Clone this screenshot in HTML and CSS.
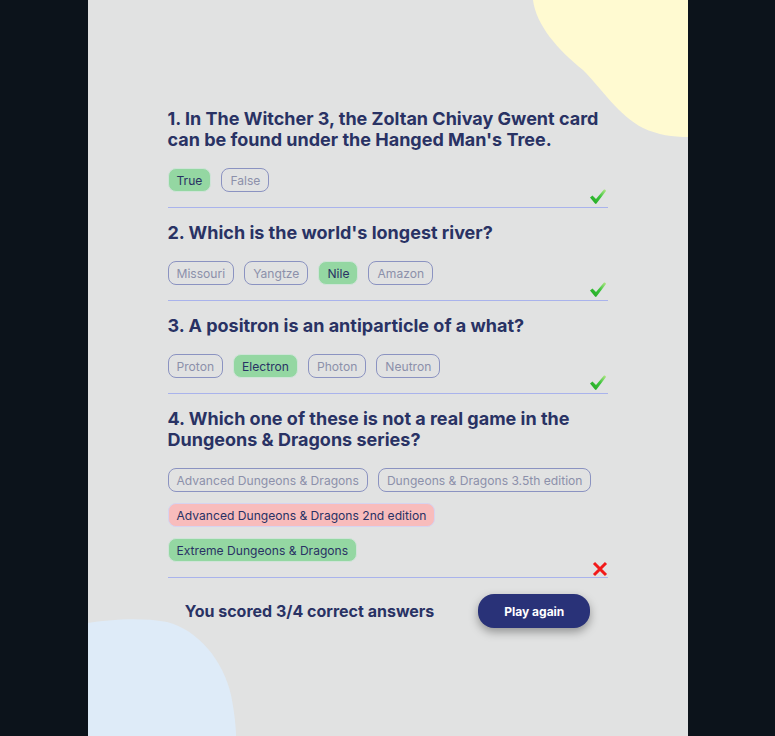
FILE: index.html
```html
<!DOCTYPE html>
<html lang="en">
<head>
<meta charset="utf-8">
<title>Quizzical</title>
<link rel="stylesheet" href="styles.css">
</head>
<body>
<div class="page">
  <svg class="blob blob-yellow" width="600" height="140" viewBox="0 0 600 140">
    <path d="M445,0 C448,25 470,50 495,70 C515,90 530,115 555,128 C570,135 585,137 600,137 L600,0 Z" fill="#fffad1"/>
  </svg>
  <svg class="blob blob-blue" width="150" height="120" viewBox="0 616 150 120">
    <path d="M0,623 C20,620 50,617 79,622 C110,630 135,660 143,695 C147,715 148,730 148,736 L0,736 Z" fill="#deebf8"/>
  </svg>
  <main class="quiz">
    <section class="question">
      <h2 class="q-title">1. In The Witcher 3, the Zoltan Chivay Gwent card can be found under the Hanged Man's Tree.</h2>
      <div class="answers">
        <span class="answer correct">True</span>
        <span class="answer">False</span>
      </div>
      <svg class="mark check" width="18" height="17" viewBox="0 0 18 17"><defs><linearGradient id="g1" x1="0" y1="1" x2="1" y2="0"><stop offset="0" stop-color="#1fa51f"/><stop offset="0.55" stop-color="#3cc43c"/><stop offset="1" stop-color="#b6e88a"/></linearGradient></defs><path d="M1,9.5 L3.5,7.5 L7,11 L15,1.5 Q17,1 17,3 L7.5,15.5 Q6.8,16.3 6,15.5 Z" fill="url(#g1)"/></svg>
    </section>
    <section class="question">
      <h2 class="q-title">2. Which is the world's longest river?</h2>
      <div class="answers">
        <span class="answer">Missouri</span>
        <span class="answer">Yangtze</span>
        <span class="answer correct">Nile</span>
        <span class="answer">Amazon</span>
      </div>
      <svg class="mark check" width="18" height="17" viewBox="0 0 18 17"><path d="M1,9.5 L3.5,7.5 L7,11 L15,1.5 Q17,1 17,3 L7.5,15.5 Q6.8,16.3 6,15.5 Z" fill="url(#g1)"/></svg>
    </section>
    <section class="question">
      <h2 class="q-title">3. A positron is an antiparticle of a what?</h2>
      <div class="answers">
        <span class="answer">Proton</span>
        <span class="answer correct">Electron</span>
        <span class="answer">Photon</span>
        <span class="answer">Neutron</span>
      </div>
      <svg class="mark check" width="18" height="17" viewBox="0 0 18 17"><path d="M1,9.5 L3.5,7.5 L7,11 L15,1.5 Q17,1 17,3 L7.5,15.5 Q6.8,16.3 6,15.5 Z" fill="url(#g1)"/></svg>
    </section>
    <section class="question">
      <h2 class="q-title">4. Which one of these is not a real game in the Dungeons &amp; Dragons series?</h2>
      <div class="answers">
        <span class="answer">Advanced Dungeons &amp; Dragons</span>
        <span class="answer">Dungeons &amp; Dragons 3.5th edition</span>
        <span class="answer wrong">Advanced Dungeons &amp; Dragons 2nd edition</span>
        <span class="answer correct">Extreme Dungeons &amp; Dragons</span>
      </div>
      <svg class="mark cross" width="16" height="16" viewBox="0 0 16 16"><path d="M2,2 L14,14 M14,2 L2,14" stroke="#f21a1a" stroke-width="3" stroke-linecap="butt"/></svg>
    </section>
    <div class="result">
      <p class="score">You scored 3/4 correct answers</p>
      <button class="play-btn">Play again</button>
    </div>
  </main>
</div>
</body>
</html>
```

FILE: styles.css
```css
* { box-sizing: border-box; }
html, body { margin: 0; padding: 0; }
body {
  background: #0c131b;
  font-family: Inter, "Noto Sans", sans-serif;
}
.page {
  position: relative;
  width: 600px;
  min-height: 736px;
  margin: 0 auto;
  background: #e1e2e2;
  overflow: hidden;
}
.blob { position: absolute; display: block; }
.blob-yellow { top: 0; left: 0; }
.blob-blue { left: 0; bottom: 0; }
.quiz {
  position: relative;
  z-index: 1;
  padding: 108px 80px 40px;
}
.question {
  position: relative;
  border-bottom: 1px solid #a9b3ec;
  padding-bottom: 15px;
  margin-bottom: 14px;
}
.q-title {
  margin: 0 0 18px;
  font-size: 18px;
  line-height: 21px;
  font-weight: 700;
  color: #293264;
}
.answers {
  display: flex;
  flex-wrap: wrap;
  gap: 11px 10px;
}
.answer {
  display: inline-flex;
  align-items: center;
  height: 24px;
  padding: 0 8px;
  border: 1px solid #8b93c1;
  border-radius: 8px;
  font-size: 12.1px;
  color: #8c90aa;
  white-space: nowrap;
}
.answer.correct {
  background: #94d7a2;
  border-color: #cfe4d8;
  color: #293264;
}
.answer.wrong {
  background: #f8bcbc;
  border-color: #d6d3f0;
  color: #293264;
}
.mark { position: absolute; display: block; }
.check { right: 1px; bottom: 2px; }
.cross { right: 0; bottom: 0; }
.result {
  display: flex;
  justify-content: center;
  align-items: center;
  gap: 44px;
  padding-top: 2px;
}
.score {
  margin: 0;
  font-size: 16px;
  font-weight: 700;
  color: #293264;
}
.play-btn {
  width: 112px;
  height: 34px;
  border: none;
  border-radius: 16px;
  background: #293278;
  color: #fff;
  font-family: Inter, "Noto Sans", sans-serif;
  font-size: 12px;
  font-weight: 700;
  box-shadow: 0 4px 10px rgba(0, 0, 0, 0.35);
}
```
